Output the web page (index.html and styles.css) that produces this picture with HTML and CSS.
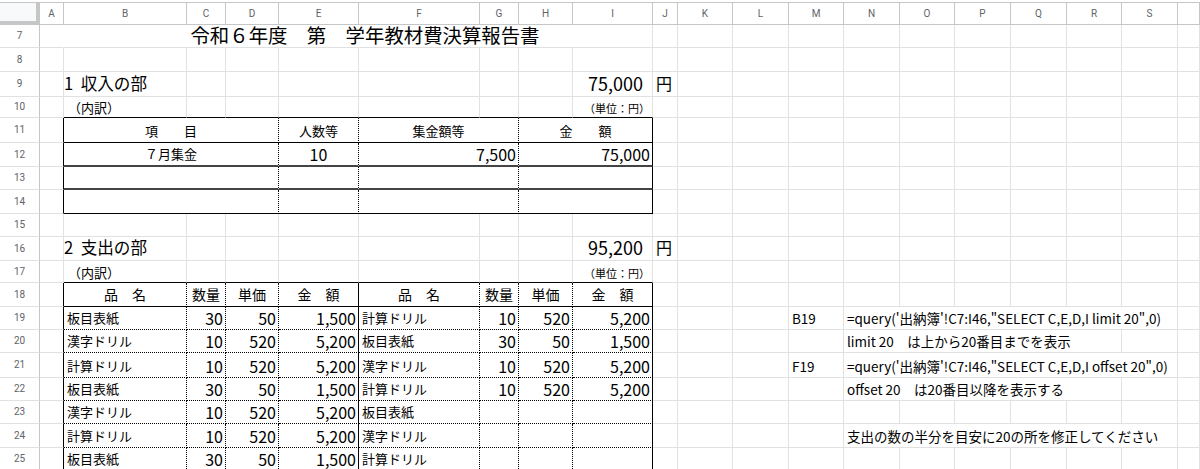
FILE: index.html
```html
<!DOCTYPE html>
<html lang="ja">
<head>
<meta charset="utf-8">
<title>教材費決算報告書</title>
<link rel="stylesheet" href="styles.css">
</head>
<body>
<div class="sheet">
  <!-- column headers -->
  <div class="corner"></div>
  <div class="ch">A</div><div class="ch">B</div><div class="ch">C</div><div class="ch">D</div><div class="ch">E</div><div class="ch">F</div><div class="ch">G</div><div class="ch">H</div><div class="ch">I</div><div class="ch">J</div><div class="ch">K</div><div class="ch">L</div><div class="ch">M</div><div class="ch">N</div><div class="ch">O</div><div class="ch">P</div><div class="ch">Q</div><div class="ch">R</div><div class="ch">S</div><div class="ch"></div>

  <!-- row 7 -->
  <div class="rh">7</div>
  <div class="nr"></div>
  <div class="title s8">令和６年度　第　学年教材費決算報告書</div>
  <div></div><div></div><div></div><div></div><div></div><div></div><div></div><div></div><div></div><div></div><div></div>

  <!-- row 8 -->
  <div class="rh">8</div>
  <div></div><div></div><div></div><div></div><div></div><div></div><div></div><div></div><div></div><div></div><div></div><div></div><div></div><div></div><div></div><div></div><div></div><div></div><div></div><div></div>

  <!-- row 9 -->
  <div class="rh">9</div>
  <div></div>
  <div class="sec">1&nbsp;&nbsp;収入の部</div>
  <div></div><div></div><div></div><div></div><div></div><div></div>
  <div class="total">75,000</div>
  <div class="yen">円</div>
  <div></div><div></div><div></div><div></div><div></div><div></div><div></div><div></div><div></div><div></div>

  <!-- row 10 -->
  <div class="rh">10</div>
  <div></div>
  <div class="bs note">（内訳）</div>
  <div class="bs"></div><div class="bs"></div><div class="bs"></div><div class="bs"></div><div class="bs"></div><div class="bs"></div>
  <div class="bs unit">（単位：円）</div>
  <div></div><div></div><div></div><div></div><div></div><div></div><div></div><div></div><div></div><div></div><div></div>

  <!-- row 11 -->
  <div class="rh">11</div>
  <div class="rs"></div>
  <div class="s3 bs rd m">項　　目</div>
  <div class="bs rd m">人数等</div>
  <div class="s2 bs rd m">集金額等</div>
  <div class="s2 bs rs m">金　　額</div>
  <div></div><div></div><div></div><div></div><div></div><div></div><div></div><div></div><div></div><div></div><div></div>

  <!-- row 12 -->
  <div class="rh">12</div>
  <div class="rs"></div>
  <div class="s3 bg rd m">７月集金</div>
  <div class="bg rd m num">10</div>
  <div class="s2 bg rd n">7,500</div>
  <div class="s2 bg rs n">75,000</div>
  <div></div><div></div><div></div><div></div><div></div><div></div><div></div><div></div><div></div><div></div><div></div>

  <!-- row 13 -->
  <div class="rh">13</div>
  <div class="rs"></div>
  <div class="s3 bg rd"></div>
  <div class="bg rd"></div>
  <div class="s2 bg rd"></div>
  <div class="s2 bg rs"></div>
  <div></div><div></div><div></div><div></div><div></div><div></div><div></div><div></div><div></div><div></div><div></div>

  <!-- row 14 -->
  <div class="rh">14</div>
  <div class="rs"></div>
  <div class="s3 bs rd"></div>
  <div class="bs rd"></div>
  <div class="s2 bs rd"></div>
  <div class="s2 bs rs"></div>
  <div></div><div></div><div></div><div></div><div></div><div></div><div></div><div></div><div></div><div></div><div></div>

  <!-- row 15 -->
  <div class="rh">15</div>
  <div></div><div></div><div></div><div></div><div></div><div></div><div></div><div></div><div></div><div></div><div></div><div></div><div></div><div></div><div></div><div></div><div></div><div></div><div></div><div></div>

  <!-- row 16 -->
  <div class="rh">16</div>
  <div></div>
  <div class="sec">2&nbsp;&nbsp;支出の部</div>
  <div></div><div></div><div></div><div></div><div></div><div></div>
  <div class="total">95,200</div>
  <div class="yen">円</div>
  <div></div><div></div><div></div><div></div><div></div><div></div><div></div><div></div><div></div><div></div>

  <!-- row 17 -->
  <div class="rh">17</div>
  <div></div>
  <div class="bs note">（内訳）</div>
  <div class="bs"></div><div class="bs"></div><div class="bs"></div><div class="bs"></div><div class="bs"></div><div class="bs"></div>
  <div class="bs unit">（単位：円）</div>
  <div></div><div></div><div></div><div></div><div></div><div></div><div></div><div></div><div></div><div></div><div></div>

  <!-- row 18 -->
  <div class="rh">18</div>
  <div class="rs"></div>
  <div class="bs rd m hd">品　名</div>
  <div class="bs rd m hd">数量</div>
  <div class="bs rd m hd">単価</div>
  <div class="bs rs m hd">金　額</div>
  <div class="bs rd m hd">品　名</div>
  <div class="bs rd m hd">数量</div>
  <div class="bs rd m hd">単価</div>
  <div class="bs rs m hd">金　額</div>
  <div></div><div></div><div></div><div></div><div></div><div></div><div></div><div></div><div></div><div></div><div></div>

  <!-- row 19 -->
  <div class="rh">19</div>
  <div class="rs"></div>
  <div class="bd rd">板目表紙</div>
  <div class="bd rd n">30</div>
  <div class="bd rd n">50</div>
  <div class="bd rs n">1,500</div>
  <div class="bd rd">計算ドリル</div>
  <div class="bd rd n">10</div>
  <div class="bd rd n">520</div>
  <div class="bd rs n">5,200</div>
  <div></div><div></div><div></div>
  <div class="memo">B19</div>
  <div class="s6 memo">=query('出納簿'!C7:I46,"SELECT C,E,D,I limit 20",0)</div>
  <div></div>

  <!-- row 20 -->
  <div class="rh">20</div>
  <div class="rs"></div>
  <div class="bd rd">漢字ドリル</div>
  <div class="bd rd n">10</div>
  <div class="bd rd n">520</div>
  <div class="bd rs n">5,200</div>
  <div class="bd rd">板目表紙</div>
  <div class="bd rd n">30</div>
  <div class="bd rd n">50</div>
  <div class="bd rs n">1,500</div>
  <div></div><div></div><div></div><div></div>
  <div class="s5 memo">limit 20　は上から20番目までを表示</div>
  <div></div><div></div>

  <!-- row 21 -->
  <div class="rh">21</div>
  <div class="rs"></div>
  <div class="bd rd">計算ドリル</div>
  <div class="bd rd n">10</div>
  <div class="bd rd n">520</div>
  <div class="bd rs n">5,200</div>
  <div class="bd rd">漢字ドリル</div>
  <div class="bd rd n">10</div>
  <div class="bd rd n">520</div>
  <div class="bd rs n">5,200</div>
  <div></div><div></div><div></div>
  <div class="memo">F19</div>
  <div class="s6 memo">=query('出納簿'!C7:I46,"SELECT C,E,D,I offset 20",0)</div>
  <div></div>

  <!-- row 22 -->
  <div class="rh">22</div>
  <div class="rs"></div>
  <div class="bd rd">板目表紙</div>
  <div class="bd rd n">30</div>
  <div class="bd rd n">50</div>
  <div class="bd rs n">1,500</div>
  <div class="bd rd">計算ドリル</div>
  <div class="bd rd n">10</div>
  <div class="bd rd n">520</div>
  <div class="bd rs n">5,200</div>
  <div></div><div></div><div></div><div></div>
  <div class="s5 memo">offset 20　は20番目以降を表示する</div>
  <div></div><div></div>

  <!-- row 23 -->
  <div class="rh">23</div>
  <div class="rs"></div>
  <div class="bd rd">漢字ドリル</div>
  <div class="bd rd n">10</div>
  <div class="bd rd n">520</div>
  <div class="bd rs n">5,200</div>
  <div class="bd rd">板目表紙</div>
  <div class="bd rd"></div>
  <div class="bd rd"></div>
  <div class="bd rs"></div>
  <div></div><div></div><div></div><div></div><div></div><div></div><div></div><div></div><div></div><div></div><div></div>

  <!-- row 24 -->
  <div class="rh">24</div>
  <div class="rs"></div>
  <div class="bd rd">計算ドリル</div>
  <div class="bd rd n">10</div>
  <div class="bd rd n">520</div>
  <div class="bd rs n">5,200</div>
  <div class="bd rd">漢字ドリル</div>
  <div class="bd rd"></div>
  <div class="bd rd"></div>
  <div class="bd rs"></div>
  <div></div><div></div><div></div><div></div>
  <div class="s6 memo">支出の数の半分を目安に20の所を修正してください</div>
  <div></div>

  <!-- row 25 -->
  <div class="rh">25</div>
  <div class="rs"></div>
  <div class="bd rd">板目表紙</div>
  <div class="bd rd n">30</div>
  <div class="bd rd n">50</div>
  <div class="bd rs n">1,500</div>
  <div class="bd rd">計算ドリル</div>
  <div class="bd rd"></div>
  <div class="bd rd"></div>
  <div class="bd rs"></div>
  <div></div><div></div><div></div><div></div><div></div><div></div><div></div><div></div><div></div><div></div><div></div>
</div>
</body>
</html>
```

FILE: styles.css
```css
* {
  box-sizing: border-box;
  margin: 0;
  padding: 0;
}

html,
body {
  background: #ffffff;
}

body {
  width: 1200px;
  height: 469px;
  overflow: hidden;
  font-family: "Noto Sans CJK JP", "Noto Sans", sans-serif;
  color: #000000;
}

.sheet {
  display: grid;
  grid-template-columns: 40px 24px 123px 39px 53px 80px 121px 39px 54px 80px 25px 55px 56px 55px 56px 55px 56px 56px 55px 56px 1fr;
  grid-template-rows: 22px 23px 24px 25px 21px 25px 24px 23px 24px 23px 24px 22px 24px 23px 23px 25px 23px 23px 24px 23px;
  margin-top: 2px;
  border-top: 1px solid #c4c7c5;
}

.sheet > * {
  display: flex;
  align-items: flex-end;
  min-width: 0;
  padding: 0 3px 3px;
  border-right: 1px solid #e1e1e1;
  border-bottom: 1px solid #e1e1e1;
  font-size: 13px;
  line-height: 1.2;
  white-space: nowrap;
}

.sheet > .corner {
  background: #f8f9fa;
  border-right: 4px solid #c4c7c5;
  border-bottom: 4px solid #c4c7c5;
}

.sheet > .ch {
  align-items: center;
  justify-content: center;
  padding: 0;
  font-family: Roboto, "Liberation Sans", sans-serif;
  font-size: 10px;
  color: #5f6368;
  border-right-color: #c4c7c5;
  border-bottom-color: #c4c7c5;
}

.sheet > .rh {
  align-items: center;
  justify-content: center;
  padding: 0;
  font-family: Roboto, "Liberation Sans", sans-serif;
  font-size: 10px;
  color: #5f6368;
  border-right-color: #c4c7c5;
}

.sheet > .nr {
  border-right-color: transparent;
}

.s2 { grid-column: span 2; }
.s3 { grid-column: span 3; }
.s5 { grid-column: span 5; }
.s6 { grid-column: span 6; }
.s8 { grid-column: span 8; }

.sheet > .title {
  justify-content: center;
  font-size: 19.4px;
  padding-left: 17px;
  padding-bottom: 1px;
}

.sheet > .sec {
  font-size: 16.6px;
  padding-left: 0;
  padding-bottom: 2px;
}

.sheet > .total {
  justify-content: flex-end;
  font-size: 18px;
  padding-right: 9px;
  padding-bottom: 1px;
}

.sheet > .yen {
  font-size: 16px;
  padding-bottom: 3px;
}

.sheet > .note {
  font-size: 13px;
  padding-left: 4px;
  padding-bottom: 1px;
}

.sheet > .unit {
  justify-content: flex-end;
  font-size: 11px;
  padding-right: 2px;
  padding-bottom: 2px;
}

.sheet > .m {
  justify-content: center;
}

.sheet > .hd {
  font-size: 14px;
}

.sheet > .n {
  justify-content: flex-end;
  font-size: 16px;
  padding-right: 2px;
  padding-bottom: 1px;
}

.sheet > .num {
  font-size: 16px;
  padding-bottom: 1px;
}

.sheet > .memo {
  font-size: 13.5px;
}

/* report table borders */
.sheet > .bs { border-bottom: 1px solid #000000; }
.sheet > .bg { border-bottom: 2px solid #444444; }
.sheet > .bd { border-bottom: 1px dotted #000000; }
.sheet > .rs { border-right: 1px solid #000000; }
.sheet > .rd { border-right: 1px dotted #000000; }
```
